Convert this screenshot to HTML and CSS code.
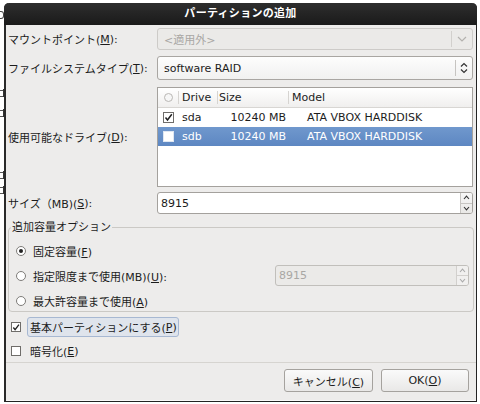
FILE: index.html
```html
<!DOCTYPE html>
<html lang="ja">
<head>
<meta charset="utf-8">
<title>パーティションの追加</title>
<link rel="stylesheet" href="styles.css">
</head>
<body>
<div class="screen">
  <div class="backdrop" aria-hidden="true">
    <div class="frag bowl f1"></div>
    <div class="frag stem f2"></div>
    <div class="frag stem f3"></div>
    <div class="frag stem f4"></div>
    <div class="frag stem f5"></div>
  </div>
  <div class="window">
    <div class="titlebar">パーティションの追加</div>
    <div class="content">
      <div class="form">
        <div class="lbl r1">マウントポイント(<u>M</u>):</div>
        <div class="combo disabled r1">
          <span class="combo-text">&lt;適用外&gt;</span>
          <span class="combo-btn">
            <svg width="10" height="6" viewBox="0 0 10 6"><path d="M1 1 L5 5 L9 1" fill="none" stroke="#b4b2af" stroke-width="1.2"/></svg>
          </span>
        </div>

        <div class="lbl r2">ファイルシステムタイプ(<u>T</u>):</div>
        <div class="combo active r2">
          <span class="combo-text">software RAID</span>
          <span class="combo-btn">
            <svg width="8" height="12" viewBox="0 0 8 12"><path d="M1 4.5 L4 1.5 L7 4.5 M1 7.5 L4 10.5 L7 7.5" fill="none" stroke="#333" stroke-width="1.2"/></svg>
          </span>
        </div>

        <div class="lbl r3">使用可能なドライブ(<u>D</u>):</div>
        <div class="tree r3">
          <div class="trow thead">
            <div class="cell c0"><span class="hradio"></span></div>
            <div class="cell c1 sep">Drive</div>
            <div class="cell c2 sep">Size</div>
            <div class="cell c3 sep">Model</div>
          </div>
          <div class="trow">
            <div class="cell c0"><span class="cb checked"><svg width="9" height="9" viewBox="0 0 9 9"><path d="M1.5 4.5 L3.5 7 L7.8 1.2" fill="none" stroke="#222" stroke-width="1.5"/></svg></span></div>
            <div class="cell c1">sda</div>
            <div class="cell c2 num">10240 MB</div>
            <div class="cell c3 model">ATA VBOX HARDDISK</div>
          </div>
          <div class="trow selected">
            <div class="cell c0"><span class="cb"></span></div>
            <div class="cell c1">sdb</div>
            <div class="cell c2 num">10240 MB</div>
            <div class="cell c3 model">ATA VBOX HARDDISK</div>
          </div>
        </div>

        <div class="lbl r4">サイズ（MB)(<u>S</u>):</div>
        <div class="spin r4">
          <span class="spin-text">8915</span>
          <span class="spin-btns">
            <span class="sb"><svg width="7" height="5" viewBox="0 0 7 5"><path d="M1 4 L3.5 1.2 L6 4" fill="none" stroke="#333" stroke-width="1.1"/></svg></span>
            <span class="sb"><svg width="7" height="5" viewBox="0 0 7 5"><path d="M1 1 L3.5 3.8 L6 1" fill="none" stroke="#333" stroke-width="1.1"/></svg></span>
          </span>
        </div>
      </div>

      <fieldset class="frame">
        <legend>追加容量オプション</legend>
        <div class="opt">
          <span class="radio on"></span>
          <span>固定容量(<u>F</u>)</span>
        </div>
        <div class="opt">
          <span class="radio"></span>
          <span>指定限度まで使用(MB)(<u>U</u>):</span>
          <div class="spin dis">
            <span class="spin-text">8915</span>
            <span class="spin-btns">
              <span class="sb"><svg width="7" height="5" viewBox="0 0 7 5"><path d="M1 4 L3.5 1.2 L6 4" fill="none" stroke="#aaa" stroke-width="1.1"/></svg></span>
              <span class="sb"><svg width="7" height="5" viewBox="0 0 7 5"><path d="M1 1 L3.5 3.8 L6 1" fill="none" stroke="#aaa" stroke-width="1.1"/></svg></span>
            </span>
          </div>
        </div>
        <div class="opt">
          <span class="radio"></span>
          <span>最大許容量まで使用(<u>A</u>)</span>
        </div>
      </fieldset>

      <div class="check first">
        <span class="box"><svg width="9" height="9" viewBox="0 0 9 9"><path d="M1.5 4.5 L3.5 7 L7.8 1.2" fill="none" stroke="#222" stroke-width="1.5"/></svg></span>
        <span class="check-label focus">基本パーティションにする(<u>P</u>)</span>
      </div>
      <div class="check">
        <span class="box"></span>
        <span class="check-label">暗号化(<u>E</u>)</span>
      </div>

      <div class="actions">
        <button class="btn">キャンセル(<u>C</u>)</button>
        <button class="btn">OK(<u>O</u>)</button>
      </div>
    </div>
  </div>
</div>
</body>
</html>
```

FILE: styles.css
```css
* { box-sizing: border-box; }
html, body {
  margin: 0;
  padding: 0;
  background: #ffffff;
}
body {
  width: 480px;
  height: 404px;
  overflow: hidden;
  font-family: "DejaVu Sans", "Noto Sans CJK JP", sans-serif;
  font-size: 11px;
  color: #1c1c1c;
}
u { text-decoration: underline; text-underline-offset: 1px; }

.screen {
  display: flex;
  align-items: flex-start;
}

/* sliver of a window lying behind the dialog */
.backdrop {
  width: 4px;
  height: 404px;
  overflow: hidden;
  flex: none;
}
.frag { width: 4px; height: 8px; display: flex; align-items: flex-end; }
.frag.stem { border-right: 1px solid #333; }
.frag.stem::before {
  content: "";
  width: 3px;
  height: 5px;
  border-top: 1px solid #555;
  border-bottom: 1px solid #555;
}
.frag.bowl::before {
  content: "";
  width: 3px;
  height: 6px;
  border: 1px solid #444;
  border-left: none;
  border-radius: 0 3px 3px 0;
}
.frag.f1 { margin-top: 11px; }
.frag.f2 { margin-top: 70px; }
.frag.f3 { margin-top: 12px; }
.frag.f4 { margin-top: 54px; }
.frag.f5 { margin-top: 7px; }

.window {
  flex: none;
  margin-top: 3px;
  width: 473px;
  height: 399px;
  background: #edeceb;
  border: 1px solid #232323;
  border-top: none;
  border-left: 2px solid #2a2a2a;
  border-radius: 5px 5px 0 0;
  display: flex;
  flex-direction: column;
}

.titlebar {
  height: 22px;
  line-height: 22px;
  margin: 0 -1px 0 -2px;
  border-radius: 5px 5px 0 0;
  background: linear-gradient(#2e2e2e, #1a1a1a);
  color: #ffffff;
  font-weight: bold;
  text-align: center;
  letter-spacing: 0.3px;
}

.content {
  flex: 1;
  padding: 3px 3px 0 2px;
  display: flex;
  flex-direction: column;
}

.form {
  display: grid;
  grid-template-columns: 149px 316px;
  grid-template-rows: 22px 24px 101px 21px;
  row-gap: 6px;
}
.form .r3 { margin-top: 1px; }
.form .r4 { margin-top: -1px; }

.lbl {
  display: flex;
  align-items: center;
  white-space: nowrap;
}

.combo {
  display: flex;
  align-items: center;
  border-radius: 3px;
}
.combo-text { flex: 1; padding-left: 6px; }
.combo-btn {
  display: flex;
  align-items: center;
  justify-content: center;
  border-left: 1px solid #d2d0cd;
}
.combo.disabled {
  background: #ebeae8;
  border: 1px solid #cdcbc8;
  color: #a9a7a4;
}
.combo.disabled .combo-btn { width: 21px; margin: 2px 0; align-self: stretch; }
.combo.active {
  background: linear-gradient(#fdfdfd, #f1f1f0);
  border: 1px solid #a9a6a2;
  color: #1c1c1c;
}
.combo.active .combo-btn { width: 17px; margin: 3px 0; align-self: stretch; border-left-color: #c6c4c1; }

.tree {
  background: #ffffff;
  border: 1px solid #a4a19d;
  display: flex;
  flex-direction: column;
}
.trow {
  display: grid;
  grid-template-columns: 20px 39px 71px 1fr;
  height: 19px;
  align-items: center;
}
.thead {
  height: 20px;
  background: linear-gradient(#ffffff, #f0efee);
  border-bottom: 1px solid #d8d6d3;
}
.cell { height: 100%; display: flex; align-items: center; white-space: nowrap; }
.thead .cell.sep { border-left: 1px solid #d6d4d1; padding-left: 3px; margin: 3px 0; height: auto; align-self: stretch; }
.thead .c2 { padding-left: 1px !important; }
.thead .c3 { padding-left: 3px; }
.c0 { justify-content: center; padding-left: 1px; }
.trow:not(.thead) .c1 { padding-left: 4px; }
.num { justify-content: flex-end; padding-right: 2px; }
.model { padding-left: 19px; }

.hradio {
  width: 9px;
  height: 9px;
  border-radius: 50%;
  border: 1px solid #b9b7b4;
  background: #f6f6f6;
}
.cb {
  width: 11px;
  height: 11px;
  border: 1px solid #6f6d6a;
  background: #ffffff;
  display: flex;
  align-items: center;
  justify-content: center;
}
.selected {
  background: linear-gradient(#7098cd, #5d87c2);
  color: #ffffff;
}
.selected .cb { border-color: #dfe7f2; }

.spin {
  display: flex;
  align-items: stretch;
  background: #ffffff;
  border: 1px solid #a4a19d;
  border-radius: 3px;
}
.spin-text { flex: 1; display: flex; align-items: center; padding-left: 3px; }
.spin-btns {
  width: 12px;
  display: flex;
  flex-direction: column;
  border-left: 1px solid #c7c5c2;
  background: linear-gradient(#f7f7f7, #e9e8e6);
  border-radius: 0 2px 2px 0;
}
.sb { flex: 1; display: flex; align-items: center; justify-content: center; }
.sb + .sb { border-top: 1px solid #c7c5c2; }

.frame {
  margin: 7px 0 0 0;
  padding: 4px 0 0 0;
  height: 91px;
  width: 466px;
  border: 1px solid #cbc9c5;
  border-radius: 4px;
}
.frame legend {
  padding: 0 1px;
  margin-left: 2px;
  line-height: 13px;
}
.opt {
  height: 25px;
  display: flex;
  align-items: center;
  padding-left: 7px;
  white-space: nowrap;
}
.radio {
  width: 10px;
  height: 10px;
  border-radius: 50%;
  border: 1px solid #7e7c79;
  background: #ffffff;
  margin-right: 7px;
  display: inline-flex;
  align-items: center;
  justify-content: center;
  flex: none;
}
.radio.on::after {
  content: "";
  width: 4px;
  height: 4px;
  border-radius: 50%;
  background: #222;
}
.spin.dis {
  margin-left: auto;
  margin-right: 4px;
  width: 194px;
  height: 21px;
  background: #ebeae8;
  border-color: #c1bfbb;
  color: #a9a7a4;
}
.spin.dis .spin-btns { background: #f1f0ef; border-left-color: #d2d0cd; }
.spin.dis .sb + .sb { border-top-color: #d2d0cd; }

.check {
  height: 20px;
  display: flex;
  align-items: center;
  padding-left: 3px;
  white-space: nowrap;
}
.check.first { margin-top: 5px; }
.check + .check { margin-top: 4px; }
.box {
  width: 10px;
  height: 10px;
  border: 1px solid #6f6d6a;
  background: #ffffff;
  display: flex;
  align-items: center;
  justify-content: center;
  margin-right: 8px;
  flex: none;
}
.check-label {
  height: 20px;
  display: flex;
  align-items: center;
  padding: 0 1px 0 2px;
  margin-left: -2px;
  border: 1px solid transparent;
  border-radius: 3px;
}
.check-label.focus {
  background: #dfe4ec;
  border-color: #a7b8d2;
}

.actions {
  margin-top: auto;
  border-top: 1px solid #d6d4d0;
  box-shadow: 0 -1px 0 #f8f8f7 inset;
  display: flex;
  justify-content: flex-end;
  gap: 8px;
  padding: 6px 5px 9px 0;
  margin-left: -2px;
  margin-right: -3px;
}
.btn {
  width: 89px;
  height: 23px;
  font: inherit;
  color: #1c1c1c;
  background: linear-gradient(#fafafa, #e9e8e7);
  border: 1px solid #a5a29e;
  border-radius: 3px;
  padding: 0;
}
.btn + .btn { width: 88px; margin-right: 2px; }
```
